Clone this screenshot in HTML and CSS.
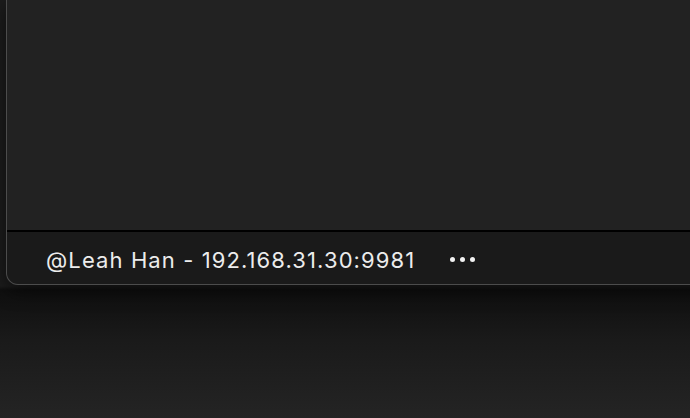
FILE: index.html
```html
<!DOCTYPE html>
<html>
<head>
<meta charset="utf-8">
<link rel="stylesheet" href="styles.css">
</head>
<body>
<div class="window">
  <div class="content"></div>
  <div class="footer">
    <span class="label">@Leah Han - 192.168.31.30:9981</span>
    <span class="more"><i></i><i></i><i></i></span>
  </div>
</div>
</body>
</html>
```
FILE: styles.css
```css
html, body {
  margin: 0;
  height: 100%;
}
body {
  overflow: hidden;
  background: linear-gradient(to bottom, #1c1c1c 0, #1c1c1c 286px, #0f0f0f 290px, #1a1a1a 340px, #242424 418px);
  font-family: Inter, "Open Sans", sans-serif;
}
.window {
  margin-left: 6px;
  width: 800px;
  border: 1px solid #4c4c4c;
  border-top: none;
  border-radius: 0 0 0 12px;
  background: #1a1a1a;
  overflow: hidden;
  box-shadow: 0 6px 18px rgba(0, 0, 0, 0.55);
}
.content {
  height: 230px;
  background: #222222;
  border-bottom: 2px solid #000;
}
.footer {
  height: 52px;
  display: flex;
  align-items: center;
  padding-left: 39px;
  box-sizing: border-box;
  padding-top: 3px;
}
.label {
  color: #ececec;
  font-size: 22px;
  letter-spacing: 1.1px;
}
.more {
  display: flex;
  gap: 5px;
  margin-left: 35px;
}
.more i {
  width: 5px;
  height: 5px;
  border-radius: 50%;
  background: #f2f2f2;
}
```
